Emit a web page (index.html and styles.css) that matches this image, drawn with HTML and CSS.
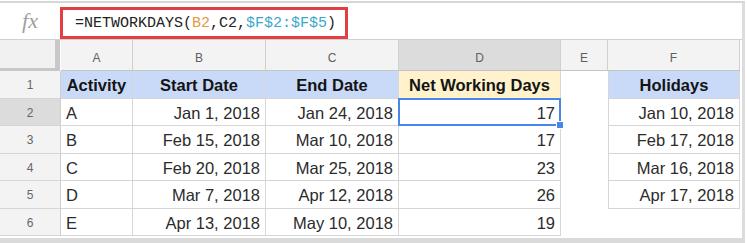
FILE: index.html
```html
<!DOCTYPE html>
<html>
<head>
<meta charset="utf-8">
<link rel="stylesheet" href="styles.css">
</head>
<body>
<div class="frame">
  <div class="fbar">
    <div class="fx">fx</div>
    <div class="finput">=NETWORKDAYS(<span class="ref-o">B2</span>,C2,<span class="ref-t">$F$2:$F$5</span>)</div>
  </div>
  <div class="sheet">
    <div class="corner"></div>
    <div class="colh">A</div>
    <div class="colh">B</div>
    <div class="colh">C</div>
    <div class="colh sel">D</div>
    <div class="colh">E</div>
    <div class="colh">F</div>

    <div class="rowh">1</div>
    <div class="c hd blue">Activity</div>
    <div class="c hd blue">Start Date</div>
    <div class="c hd blue">End Date</div>
    <div class="c hd yellow">Net Working Days</div>
    <div class="e"></div>
    <div class="c f hd blue">Holidays</div>

    <div class="rowh sel">2</div>
    <div class="c l">A</div>
    <div class="c">Jan 1, 2018</div>
    <div class="c">Jan 24, 2018</div>
    <div class="c active">17<span class="handle"></span></div>
    <div class="e"></div>
    <div class="c f">Jan 10, 2018</div>

    <div class="rowh">3</div>
    <div class="c l">B</div>
    <div class="c">Feb 15, 2018</div>
    <div class="c">Mar 10, 2018</div>
    <div class="c">17</div>
    <div class="e"></div>
    <div class="c f">Feb 17, 2018</div>

    <div class="rowh">4</div>
    <div class="c l">C</div>
    <div class="c">Feb 20, 2018</div>
    <div class="c">Mar 25, 2018</div>
    <div class="c">23</div>
    <div class="e"></div>
    <div class="c f">Mar 16, 2018</div>

    <div class="rowh">5</div>
    <div class="c l">D</div>
    <div class="c">Mar 7, 2018</div>
    <div class="c">Apr 12, 2018</div>
    <div class="c">26</div>
    <div class="e"></div>
    <div class="c f">Apr 17, 2018</div>

    <div class="rowh">6</div>
    <div class="c l">E</div>
    <div class="c">Apr 13, 2018</div>
    <div class="c">May 10, 2018</div>
    <div class="c">19</div>
    <div class="e"></div>
    <div class="e"></div>
  </div>
</div>
</body>
</html>
```
FILE: styles.css
```css
html, body {
  margin: 0;
  padding: 0;
  background: #ffffff;
}
body {
  padding-top: 1px;
  font-family: "Liberation Sans", Arial, sans-serif;
}
.frame {
  width: 745px;
  box-sizing: border-box;
  border-top: 2px solid #d6d6d6;
  border-right: 3px solid #dcdcdc;
  border-bottom: 5px solid #dadada;
  padding-bottom: 2px;
  background: #fff;
}
.fbar {
  display: flex;
  align-items: flex-start;
  height: 36px;
  border-bottom: 1px solid #d0d0d0;
}
.fx {
  width: 60px;
  height: 36px;
  display: flex;
  align-items: center;
  justify-content: center;
  font-family: "Liberation Serif", "Times New Roman", serif;
  font-style: italic;
  font-size: 22px;
  color: #a0a0a0;
  padding-bottom: 1px;
  box-sizing: border-box;
}
.finput {
  margin-top: 4px;
  width: 288px;
  height: 32px;
  box-sizing: border-box;
  border: 3px solid #e23f42;
  padding-left: 12px;
  display: flex;
  align-items: center;
  font-family: "Liberation Mono", "Courier New", monospace;
  font-size: 15px;
  color: #222;
  white-space: pre;
}
.ref-o { color: #e59a3e; }
.ref-t { color: #3aa8c9; }

.sheet {
  display: grid;
  grid-template-columns: 61px 72px 133px 133px 162px 47px 132px;
  grid-template-rows: 31px repeat(6, 27.5px);
}
.corner {
  background: #f1f1f1;
  border-right: 5px solid #c8c8c8;
  border-bottom: 4px solid #c8c8c8;
  margin-bottom: -1px;
  margin-right: 1px;
  box-sizing: border-box;
}
.colh {
  background: #f3f3f3;
  border-right: 1px solid #cfcfcf;
  border-bottom: 1px solid #c4c4c4;
  box-sizing: border-box;
  display: flex;
  align-items: center;
  justify-content: center;
  padding-top: 5px;
  font-size: 12px;
  color: #5f5f5f;
}
.colh.sel { background: #dcdcdc; }
.rowh {
  background: #f3f3f3;
  border-right: 1px solid #cfcfcf;
  border-bottom: 1px solid #d6d6d6;
  box-sizing: border-box;
  display: flex;
  align-items: center;
  justify-content: center;
  padding-top: 2px;
  font-size: 12px;
  color: #666;
}
.rowh.sel { background: #dcdcdc; }
.c {
  border-right: 1px solid #d6d6d6;
  border-bottom: 1px solid #d6d6d6;
  box-sizing: border-box;
  display: flex;
  align-items: center;
  justify-content: flex-end;
  padding: 3px 5px 0;
  font-size: 16.5px;
  color: #2b2b2b;
  white-space: nowrap;
}
.c.l { justify-content: flex-start; }
.c.hd {
  justify-content: center;
  font-weight: bold;
  color: #141414;
}
.c.f { border-left: 1px solid #d6d6d6; }
.blue { background: #c9daf8; }
.yellow { background: #fff2cc; }
.e { background: #fff; }
.active {
  position: relative;
}
.active::after {
  content: "";
  position: absolute;
  left: -1px;
  top: -1px;
  right: -1px;
  bottom: -1px;
  border: 2px solid #4a86e8;
}
.handle {
  position: absolute;
  right: -4px;
  bottom: -4px;
  width: 6px;
  height: 6px;
  background: #4a86e8;
  border: 1px solid #fff;
  z-index: 2;
}
```
